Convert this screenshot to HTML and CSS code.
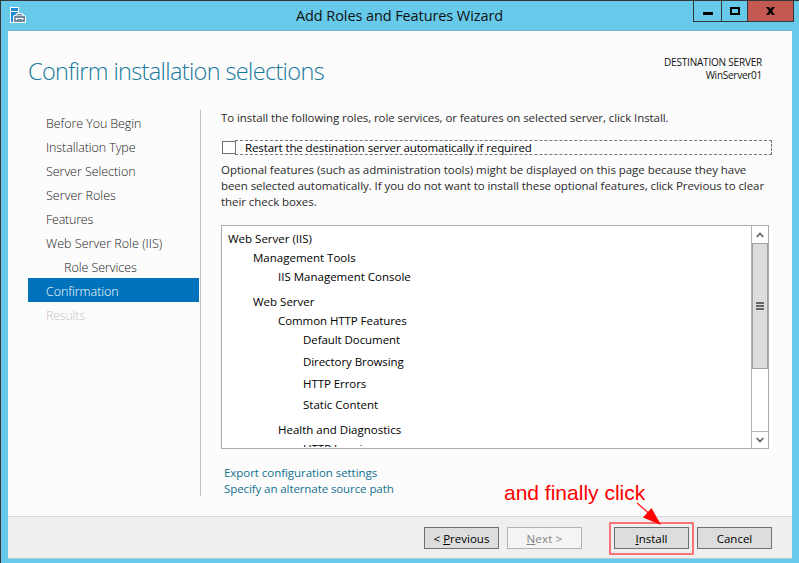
FILE: index.html
```html
<!DOCTYPE html>
<html lang="en">
<head>
<meta charset="utf-8">
<title>Add Roles and Features Wizard</title>
<link rel="stylesheet" href="styles.css">
</head>
<body>
<div class="window">
  <header class="titlebar">
    <svg class="app-icon" width="16" height="16" viewBox="0 0 16 16">
      <rect x="0" y="0" width="9" height="16" fill="#fff"/>
      <path d="M1 1h7v3H1zM1 5h7v2L3 9v6H1z" fill="#1c8ad6"/>
      <path d="M3 16V9l2-1 2-2h5l2 2 2 1v7z" fill="#fff"/>
      <path d="M4 9h11v6H4z" fill="#71899c"/>
      <path d="M6 8.500L7.500 7h4L13 8.500z" fill="#71899c"/>
      <path d="M5.500 11.500h8M6.500 11v2M12.500 11v2" stroke="#fff" fill="none"/>
    </svg>
    <h1 class="window-title">Add Roles and Features Wizard</h1>
    <div class="controls">
      <span class="control"><svg width="10" height="8" viewBox="0 0 10 8"><path d="M0 5h10v3H0z"/></svg></span>
      <span class="control"><svg width="10" height="8" viewBox="0 0 10 8"><path d="M0 0h10v8H0zM2 2v4h6V2z" fill-rule="evenodd"/></svg></span>
      <span class="control control-close"><svg width="9" height="8" viewBox="0 0 9 8"><path d="M0 0h3l1.500 2L6 0h3L6 4l3 4H6L4.500 6 3 8H0l3-4z"/></svg></span>
    </div>
  </header>
  <main class="wizard">
    <div class="heading-row">
      <h2 class="heading">Confirm installation selections</h2>
      <div class="destination"><div class="dest-label">DESTINATION SERVER</div><div class="dest-name">WinServer01</div></div>
    </div>
    <div class="columns">
      <nav class="steps">
        <a class="step t1">Before You Begin</a>
        <a class="step t1">Installation Type</a>
        <a class="step">Server Selection</a>
        <a class="step t0">Server Roles</a>
        <a class="step t2">Features</a>
        <a class="step t0">Web Server Role (IIS)</a>
        <a class="step sub">Role Services</a>
        <a class="step current">Confirmation</a>
        <a class="step disabled t2">Results</a>
      </nav>
      <section class="page">
        <p class="intro">To install the following roles, role services, or features on selected server, click Install.</p>
        <div class="restart"><span class="checkbox"></span><span class="restart-label">Restart the destination server automatically if required</span></div>
        <p class="note"><span class="note-a">Optional features (such as administration tools) might be displayed on this page because they have</span><br><span class="note-b">been selected automatically. If you do not want to install these optional features, click Previous to clear</span><br><span class="note-b">their check boxes.</span></p>
        <div class="listbox">
          <ul class="tree">
            <li class="l0">Web Server (IIS)</li>
            <li class="l1">Management Tools</li>
            <li class="l2 group-end">IIS Management Console</li>
            <li class="l1">Web Server</li>
            <li class="l2 tight">Common HTTP Features</li>
            <li class="l3 leaf tight">Default Document</li>
            <li class="l3 leaf tight">Directory Browsing</li>
            <li class="l3 leaf-short tight">HTTP Errors</li>
            <li class="l3 group-end">Static Content</li>
            <li class="l2">Health and Diagnostics</li>
            <li class="l3">HTTP Logging</li>
          </ul>
          <div class="scrollbar">
            <span class="arrow"><svg width="8" height="6" viewBox="0 0 8 6"><path d="M.7 5L4 1.500 7.300 5" fill="none" stroke="#606060" stroke-width="1.700"/></svg></span>
            <span class="thumb"><i></i><i></i><i></i></span>
            <span class="track"></span>
            <span class="arrow arrow-down"><svg width="8" height="6" viewBox="0 0 8 6"><path d="M.7 1L4 4.500 7.300 1" fill="none" stroke="#606060" stroke-width="1.700"/></svg></span>
          </div>
        </div>
        <div class="links"><a class="link-export">Export configuration settings</a><a class="link-path">Specify an alternate source path</a></div>
      </section>
    </div>
    <footer class="footer">
      <button class="btn">&lt; <u>P</u>revious</button>
      <button class="btn btn-next" disabled><u>N</u>ext &gt;</button>
      <button class="btn btn-install"><u>I</u>nstall</button>
      <button class="btn">Cancel</button>
    </footer>
  </main>
  <div class="callout-text">and finally click</div>
  <div class="callout-box"></div>
  <svg class="callout-arrow" width="30" height="28" viewBox="0 0 30 28"><path d="M1 1L16 14" stroke="#ff1010" stroke-width="1.200"/><path d="M25 23L7 15.500 15.500 6z" fill="#f00"/></svg>
</div>
</body>
</html>
```
FILE: styles.css
```css
* { box-sizing: border-box; }
body { margin: 0; font: 11.5px/16px "Open Sans", sans-serif; color: #111; }
h1, h2, p, ul { margin: 0; padding: 0; font-weight: 400; }
.window {
  position: relative;
  width: 799px;
  height: 563px;
  padding: 0 7px 4px;
  display: flex;
  flex-direction: column;
  background: #67caea;
  border-top: 1px solid #343638;
  border-left: 1px solid #343638;
  overflow: hidden;
}
.titlebar { flex: none; height: 29px; display: flex; align-items: flex-start; }
.app-icon { margin: 6px 0 0 2px; }
.window-title { flex: 1; padding: 4px 0 0 270px; font-size: 14.5px; line-height: 22px; letter-spacing: -.09px; }
.controls { display: flex; margin-right: -2px; border: 1px solid #343638; border-top: 0; }
.control { width: 28px; height: 20px; display: flex; justify-content: center; padding-top: 6px; }
.control:first-child { width: 27px; }
.control + .control { border-left: 1px solid #343638; width: 26px; }
.control.control-close { width: 46px; background: #c35950; }
.wizard { flex: 1; display: flex; flex-direction: column; background: #fcfcfc; width: 784px; border-top: 1px solid #7fb2c8; }
.heading-row { display: flex; justify-content: space-between; height: 79px; padding: 23px 30px 0 20px; }
.heading { font-size: 23.5px; line-height: 34px; font-weight: 300; letter-spacing: -.65px; color: #16789a; }
.destination { text-align: right; font-size: 10px; line-height: 13px; padding-top: 2px; }
.dest-label { letter-spacing: -.2px; }
.dest-name { letter-spacing: -.26px; }
.columns { display: flex; flex: 1; }
.steps { width: 193px; height: 386px; padding: 0 1px 0 20px; border-right: 1px solid #c3c3c3; }
.step { display: block; height: 24px; padding-left: 18px; font-size: 12.5px; line-height: 27px; font-weight: 300; letter-spacing: -.05px; color: #222; white-space: nowrap; }
.step.t0 { letter-spacing: .03px; }
.step.t1 { letter-spacing: -.09px; }
.step.t2 { letter-spacing: -.22px; }
.step.sub { padding-left: 36px; }
.step.current { background: #0072bc; color: #fff; }
.step.disabled { color: #c6c6c6; }
.page { width: 591px; padding-left: 20px; color: #2b2b2b; white-space: nowrap; }
.intro { letter-spacing: -.082px; }
.restart { display: flex; align-items: center; height: 15px; margin-top: 14px; color: #000; }
.checkbox { width: 14px; height: 13px; margin-left: 1px; border: 1px solid #707070; background: #fff; }
.restart-label { width: 537px; height: 15px; margin-left: -1px; padding-left: 9px; border: 1px dashed #777; line-height: 13px; letter-spacing: -.11px; }
.note { margin-top: 7px; letter-spacing: -.06px; }
.note-a { letter-spacing: -.045px; }
.listbox { display: flex; width: 548px; height: 224px; margin-top: 15px; border: 1px solid #aaa; background: #fff; }
.tree { flex: 1; height: 221px; padding: 3px 6px 0; overflow: hidden; list-style: none; color: #000; }
.tree li { height: 19px; line-height: 19px; }
.tree .l2 { padding-left: 50px; }
.tree .l1 { padding-left: 25px; }
.tree .l3 { padding-left: 75px; }
.tree .group-end { height: 25px; }
.tree .leaf { height: 22px; }
.tree .leaf-short { height: 21px; }
.tree .tight { letter-spacing: -.07px; }
.scrollbar { width: 17px; display: flex; flex-direction: column; border-left: 1px solid #b5b5b5; background: #fff; }
.arrow { height: 17px; display: flex; align-items: center; justify-content: center; }
.thumb { height: 126px; display: flex; flex-direction: column; align-items: center; justify-content: center; gap: 1px; border: 1px solid #a0a0a0; background: #ddd; }
.thumb i { width: 8px; height: 2px; background: #666; }
.track { flex: 1; }
.arrow-down { border-top: 1px solid #b5b5b5; }
.links { display: flex; flex-direction: column; padding: 16px 0 0 3px; color: #12718f; }
.link-export { letter-spacing: -.05px; }
.link-path { letter-spacing: -.09px; }
.footer { height: 43px; display: flex; padding: 10px 20px 0 416px; gap: 8px; border-top: 1px solid #d9d9d9; border-bottom: 1px solid #b4cbd4; background: #efefef; }
.btn { width: 75px; height: 22px; padding: 2px 0 0; border: 1px solid #707070; background: #ddd; color: #000; font: inherit; line-height: 18px; }
.btn-next { border-color: #adb2b5; background: #f4f4f4; color: #838383; letter-spacing: .2px; }
.btn-install { margin-left: 24px; }
.callout-text { position: absolute; left: 503px; top: 480px; font: 21px/24px "Liberation Sans", sans-serif; color: #f00; white-space: nowrap; }
.callout-box { position: absolute; left: 608px; top: 521px; width: 85px; height: 33px; border: 2px solid #f87474; border-radius: 1px; }
.callout-arrow { position: absolute; left: 635px; top: 501px; }
```
